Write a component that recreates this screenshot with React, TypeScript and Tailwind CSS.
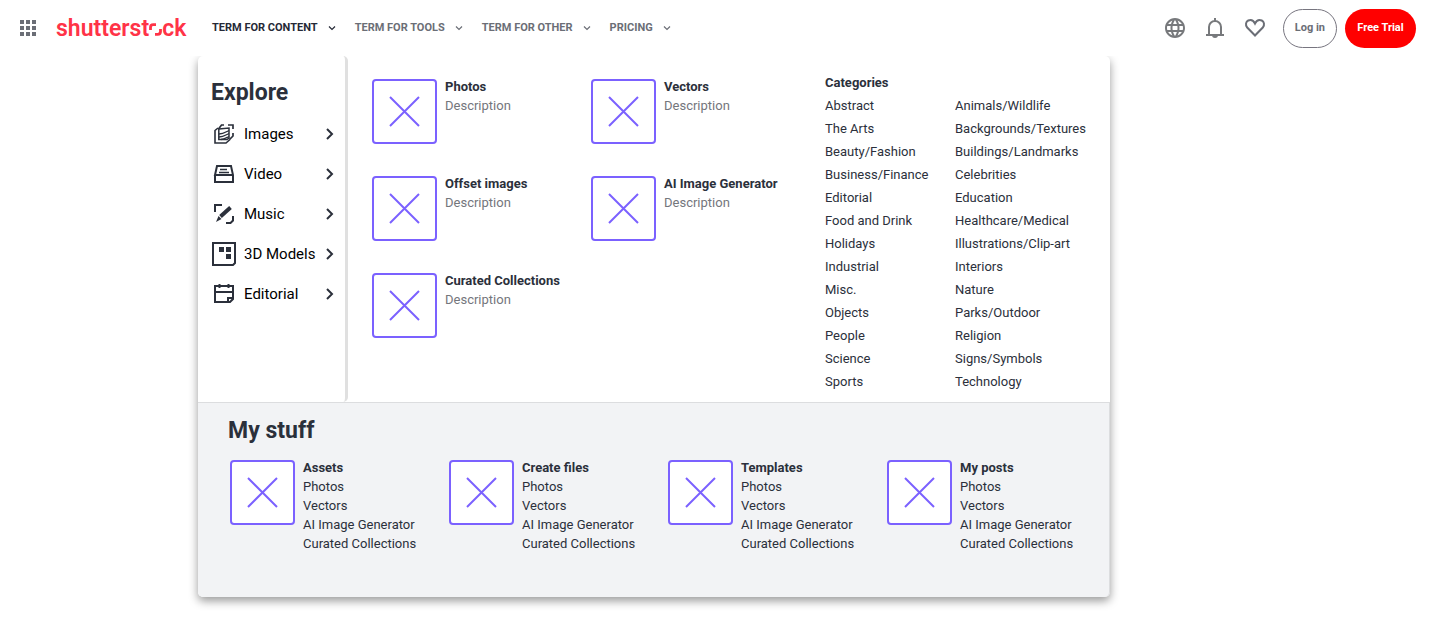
import type { ReactNode } from "react";
import { MdLanguage, MdApps } from "react-icons/md";

const navItems = ["TERM FOR CONTENT", "TERM FOR TOOLS", "TERM FOR OTHER", "PRICING"];

const products = ["Photos", "Vectors", "Offset images", "AI Image Generator", "Curated Collections"];

const categories = [
  ["Abstract", "The Arts", "Beauty/Fashion", "Business/Finance", "Editorial", "Food and Drink", "Holidays", "Industrial", "Misc.", "Objects", "People", "Science", "Sports"],
  ["Animals/Wildlife", "Backgrounds/Textures", "Buildings/Landmarks", "Celebrities", "Education", "Healthcare/Medical", "Illustrations/Clip-art", "Interiors", "Nature", "Parks/Outdoor", "Religion", "Signs/Symbols", "Technology"],
];

const stuff = ["Assets", "Create files", "Templates", "My posts"];
const stuffLinks = ["Photos", "Vectors", "AI Image Generator", "Curated Collections"];

function Icon({ children }: { children: ReactNode }) {
  return (
    <svg viewBox="0 0 24 24" className="size-6 shrink-0" fill="none" stroke="currentColor" strokeWidth="2" aria-hidden="true">
      {children}
    </svg>
  );
}

const explore: { label: string; icon: ReactNode }[] = [
  {
    label: "Images",
    icon: (
      <Icon>
        <path d="M6 6 3 8.500V21h11l4-3.500" strokeWidth="1.600" />
        <path d="M6.800 7 17 6v10l-2 1.500H6.800z" strokeWidth="1.500" />
        <path d="M7 12c4 0 6-1.500 10-3.500M7 15c4 0 6-1.500 10-3.500M9 17.500c3 0 5-1.500 8-3" strokeWidth="1.300" />
        <path d="M6.500 7 9.500 3H12M16 3h5v4M21 11v3l-3.500 3.500" strokeWidth="1.700" />
      </Icon>
    ),
  },
  {
    label: "Video",
    icon: (
      <Icon>
        <path d="M3 13v7h18v-7L19 4H5L3 13h18" />
        <path d="M8 7.500h7M7 10.500h10" strokeWidth="1.500" />
      </Icon>
    ),
  },
  {
    label: "Music",
    icon: (
      <Icon>
        <path d="M3 10V3h7M14 21h4.500l2.500-2.500V14" />
        <path d="M8.500 14.500 18.500 5.500" strokeWidth="4" />
        <path d="m6.500 14 3 3L4 20z" fill="currentColor" stroke="none" />
      </Icon>
    ),
  },
  {
    label: "3D Models",
    icon: (
      <Icon>
        <path d="M1 1h22v20l-2 2H1z" />
        <path d="M7 5h5v5H7zM14 5h5v5h-5zM14 12h5v5h-5z" fill="currentColor" stroke="none" />
      </Icon>
    ),
  },
  {
    label: "Editorial",
    icon: (
      <Icon>
        <path d="M3 4h18v13l-3 3H3z" />
        <path d="M3 10h18M7.500 2v4M16.500 2v4M16 20v-4h5" />
      </Icon>
    ),
  },
];

function NavChevron() {
  return (
    <svg viewBox="0 0 16 16" className="size-4" fill="none" stroke="currentColor" strokeWidth="1.200" aria-hidden="true">
      <path d="m5 6.500 3 3 3-3" />
    </svg>
  );
}

function Tile() {
  return (
    <div className="mt-0.5 size-[65px] shrink-0 rounded border-2 border-[#7b61ff] bg-white">
      <svg viewBox="0 0 61 61" className="size-full" fill="none" stroke="#7b61ff" strokeWidth="2" aria-hidden="true">
        <path d="m16 16 29 29M45 16 16 45" />
      </svg>
    </div>
  );
}

function Logo() {
  return (
    <a href="#" aria-label="shutterstock" className="ml-4 flex w-[131px] items-baseline pt-0.5 text-[23px] leading-7 font-semibold text-[#ff3347]">
      <span>shutterst</span>
      <svg viewBox="0 0 13 14" className="h-3.5 w-[13px] shrink-0" fill="none" stroke="currentColor" strokeWidth="2.800" aria-hidden="true">
        <path d="M1.500 8V5.500Q1.500 2.700 4.300 2.700H7M11.500 7v2.500q0 2.800-2.800 2.800H6" />
      </svg>
      <span>ck</span>
    </a>
  );
}

export default function App() {
  return (
    <div className="min-h-screen bg-white font-['Roboto',sans-serif] text-[#2b303b]">
      <header className="relative z-10 flex h-14 items-center bg-white pr-6 pl-4 text-[#6b6e76]">
        <button type="button" aria-label="All apps">
          <MdApps className="size-6" />
        </button>
        <Logo />
        <nav className="ml-[25px] flex items-center gap-[15px] text-[11px] font-bold">
          {navItems.map((item, i) => (
            <button key={item} type="button" className={i === 0 ? "flex items-center gap-1.5 text-[#252936]" : "flex items-center gap-1.5"}>
              {item}
              <NavChevron />
            </button>
          ))}
        </nav>
        <div className="ml-auto flex items-center">
          <div className="mr-4 flex gap-4">
            <button type="button" aria-label="Language">
              <MdLanguage className="size-6 text-[#77797c]" />
            </button>
            <button type="button" aria-label="Notifications">
              <svg viewBox="0 0 24 24" className="size-6" fill="none" stroke="#77797c" strokeWidth="2" aria-hidden="true">
                <path d="M3 19h18M6 19v-8a6 6 0 0 1 12 0v8M12 2v3" />
                <path d="M9 19a3 3 0 0 0 6 0z" fill="#77797c" stroke="none" />
              </svg>
            </button>
            <button type="button" aria-label="Favorites">
              <svg viewBox="0 0 24 24" className="size-6" fill="none" stroke="currentColor" strokeWidth="2" aria-hidden="true">
                <path d="M12 19.500 4.200 11.500C2 8.800 3 5.500 5.200 4.500 8 3.200 10.500 4.500 12 7.500c1.500-3 4-4.300 6.800-3 2.200 1 3.200 4.300 1 7z" />
              </svg>
            </button>
          </div>
          <div className="flex gap-2 text-[11px] font-bold">
            <button type="button" className="h-[39px] rounded-full border border-[#77757f] px-[11px]">
              Log in
            </button>
            <button type="button" className="h-[39px] min-w-[71px] rounded-full bg-[#ff0000] px-3 text-white">
              Free Trial
            </button>
          </div>
        </div>
      </header>

      <main className="ml-[198px] w-full max-w-[912px] rounded-[5px] bg-white shadow-[0_4px_10px_rgba(0,0,0,0.4)]">
        <div className="flex">
          <aside className="w-[150px] shrink-0 rounded-[5px] border-r-3 border-[#e0e0e0] pt-[21px] pb-[88px] pl-[13px]">
            <h2 className="text-[23px] leading-8 font-bold">Explore</h2>
            <ul className="mt-[5px] pl-px">
              {explore.map(({ label, icon }) => (
                <li key={label}>
                  <a href="#" className="flex h-10 items-center gap-2 pr-2.5">
                    {icon}
                    <span className="flex-1 text-[15px] whitespace-nowrap text-black">{label}</span>
                    <svg viewBox="0 0 10 14" className="h-3.5 w-2.5 shrink-0" fill="none" stroke="currentColor" strokeWidth="2" aria-hidden="true">
                      <path d="m2 2 5 5-5 5" />
                    </svg>
                  </a>
                </li>
              ))}
            </ul>
          </aside>

          <ul className="ml-6 grid w-[453px] shrink-0 grid-cols-[219px_1fr] content-start gap-y-[30px] pt-[21px] text-[13px] leading-[19px]">
            {products.map((name) => (
              <li key={name}>
                <a href="#" className="flex gap-2">
                  <Tile />
                  <div>
                    <h3 className="font-bold">{name}</h3>
                    <p className="text-[#74767c]">Description</p>
                  </div>
                </a>
              </li>
            ))}
          </ul>

          <section className="pt-[15px] text-[13px] leading-[23px]">
            <h3 className="font-bold">Categories</h3>
            <div className="flex">
              {categories.map((column) => (
                <ul key={column[0]} className="w-[130px]">
                  {column.map((name) => (
                    <li key={name}>
                      <a href="#" className="whitespace-nowrap">{name}</a>
                    </li>
                  ))}
                </ul>
              ))}
            </div>
          </section>
        </div>

        <section className="rounded-b-[5px] border-t border-r border-[#dcdddf] bg-[#f2f3f5] pt-3 pb-11 pl-[30px]">
          <h2 className="text-[23px] leading-8 font-bold">My stuff</h2>
          <div className="mt-[11px] grid grid-cols-[repeat(4,219px)] pl-0.5 text-[13px] leading-[19px]">
            {stuff.map((title) => (
              <div key={title} className="flex gap-2">
                <Tile />
                <div>
                  <h3 className="font-bold">{title}</h3>
                  <ul>
                    {stuffLinks.map((link) => (
                      <li key={link}>
                        <a href="#">{link}</a>
                      </li>
                    ))}
                  </ul>
                </div>
              </div>
            ))}
          </div>
        </section>
      </main>
    </div>
  );
}
